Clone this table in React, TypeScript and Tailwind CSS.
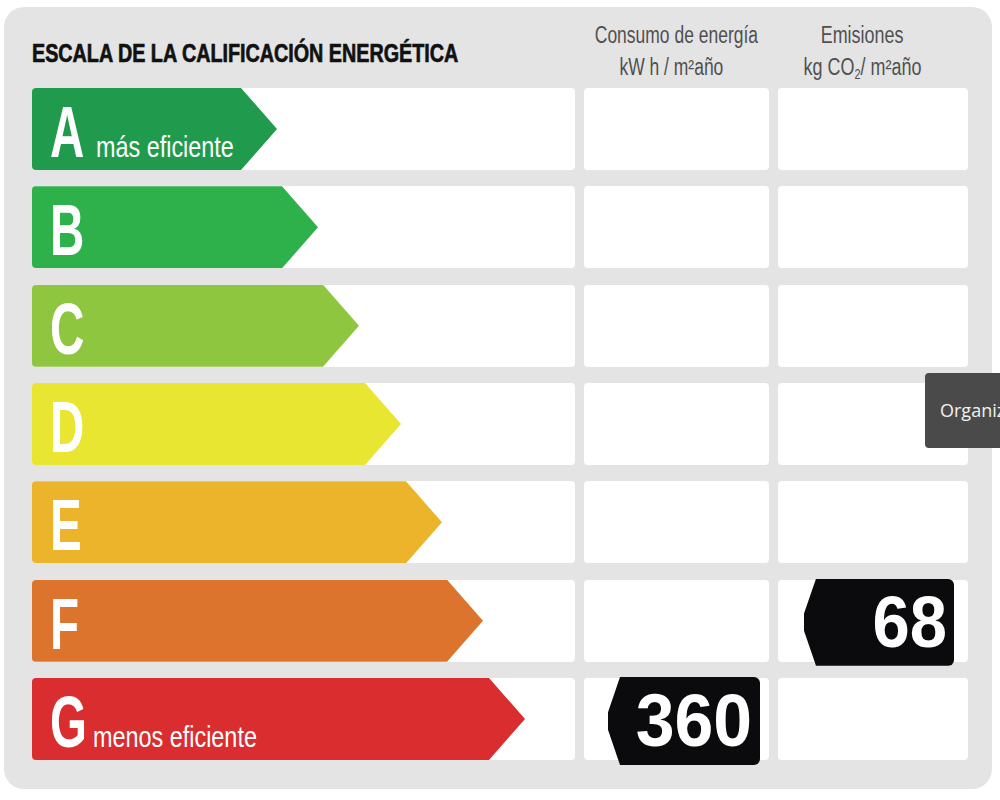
import React from 'react'

const SANS = "font-['Liberation_Sans',Arial,sans-serif]"

interface Grade {
  letter: string
  label?: string
  color: string
  width: number
  consumo?: string
  emisiones?: string
}

const grades: Grade[] = [
  { letter: 'A', label: 'más eficiente', color: 'bg-[#209a4c]', width: 245 },
  { letter: 'B', color: 'bg-[#2eb14b]', width: 286 },
  { letter: 'C', color: 'bg-[#8fc640]', width: 327 },
  { letter: 'D', color: 'bg-[#e8e631]', width: 369 },
  { letter: 'E', color: 'bg-[#ebb42a]', width: 410 },
  { letter: 'F', color: 'bg-[#dc742e]', width: 451, emisiones: '68' },
  { letter: 'G', label: 'menos eficiente', color: 'bg-[#d92d2f]', width: 493, consumo: '360' },
]

function Arrow({ grade }: { grade: Grade }) {
  return (
    <div
      className={`flex h-full items-baseline whitespace-nowrap rounded-l-[4px] pl-[18px] pt-[8px] text-white [clip-path:polygon(0_0,calc(100%_-_36px)_0,100%_50%,calc(100%_-_36px)_100%,0_100%)] ${grade.color}`}
      style={{ width: grade.width }}
    >
      <span
        className={`inline-block origin-left scale-x-[0.66] text-[72px] font-bold leading-none ${
          grade.letter === 'G' ? 'mr-[-13px]' : 'mr-[-6px]'
        }`}
      >
        {grade.letter}
      </span>
      {grade.label && (
        <span className="inline-block origin-left scale-x-[0.78] text-[30px] leading-none">
          {grade.label}
        </span>
      )}
    </div>
  )
}

function Badge({ value, big }: { value: string; big?: boolean }) {
  return (
    <div
      className={`mt-[-1px] flex justify-end rounded-[6px] bg-[#0b0b0d] [clip-path:polygon(12px_0,100%_0,100%_100%,12px_100%,0_60%,0_40%)] ${
        big ? 'h-[88px] w-[152px] pr-[8px] pt-[6px]' : 'h-[87px] w-[150px] pr-[7px] pt-[7px]'
      }`}
    >
      <span
        className={`inline-block origin-right scale-x-[0.93] font-bold leading-none text-white ${
          big ? 'text-[75px]' : 'text-[72px]'
        }`}
      >
        {value}
      </span>
    </div>
  )
}

export default function App() {
  return (
    <div className={`relative h-[800px] w-[1000px] overflow-hidden bg-white pl-[4px] pt-[7px] ${SANS}`}>
      <div className="h-[782px] w-[988px] rounded-[20px] bg-[#e4e4e4] pl-[28px]">
        {/* header */}
        <div className="grid h-[81px] grid-cols-[543px_185px_190px] gap-x-[9px]">
          <div className="whitespace-nowrap pt-[33px]">
            <span className="inline-block origin-left scale-x-[0.745] text-[26.5px] font-bold leading-none text-[#111] [-webkit-text-stroke:0.7px_#111]">
              ESCALA DE LA CALIFICACIÓN ENERGÉTICA
            </span>
          </div>
          <div className="whitespace-nowrap pt-[12px] text-[23px] leading-[32px] text-[#505050]">
            <div className="flex justify-center">
              <span className="inline-block scale-x-[0.76]">Consumo de energía</span>
            </div>
            <div className="flex justify-center pr-[10px]">
              <span className="inline-block scale-x-[0.76]">kW h / m²año</span>
            </div>
          </div>
          <div className="whitespace-nowrap pr-[22px] pt-[12px] text-[23px] leading-[32px] text-[#505050]">
            <div className="flex justify-center">
              <span className="inline-block scale-x-[0.78]">Emisiones</span>
            </div>
            <div className="flex justify-center">
              <span className="inline-block scale-x-[0.78]">
                kg CO<sub className="text-[14px]">2</sub>/ m²año
              </span>
            </div>
          </div>
        </div>

        {/* rows */}
        <div className="grid grid-cols-[543px_185px_190px] gap-x-[9px] gap-y-[16.33px]">
          {grades.map((g) => (
            <React.Fragment key={g.letter}>
              <div className="h-[82px] rounded-[4px] bg-white">
                <Arrow grade={g} />
              </div>
              <div className="flex h-[82px] items-start justify-end rounded-[4px] bg-white pr-[9px]">
                {g.consumo && <Badge value={g.consumo} big />}
              </div>
              <div className="flex h-[82px] items-start justify-end rounded-[4px] bg-white pr-[14px]">
                {g.emisiones && <Badge value={g.emisiones} />}
              </div>
            </React.Fragment>
          ))}
        </div>
      </div>

      {/* tooltip */}
      <div className="absolute left-[925px] top-[373px] flex h-[75px] w-[120px] items-center rounded-[4px] bg-[#4a4a4a] pl-[15px] font-['Open_Sans',sans-serif] text-[18px] text-[#f2f2f2]">
        Organizar
      </div>
    </div>
  )
}
